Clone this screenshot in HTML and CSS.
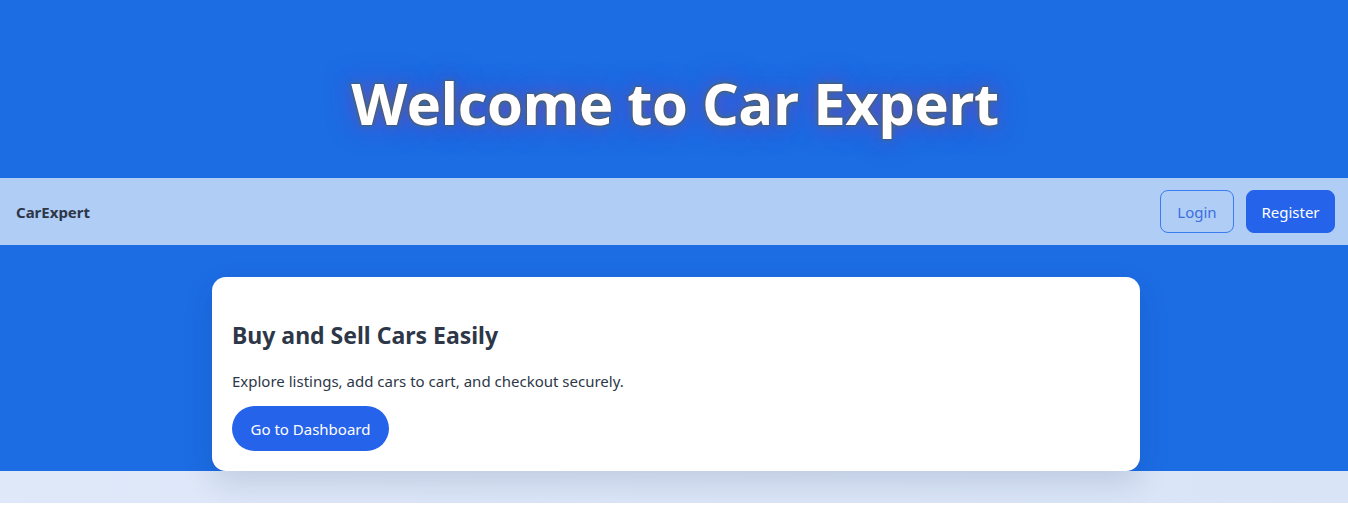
FILE: index.html
```html
<!DOCTYPE html>
<html lang="en">
<head>
<meta charset="utf-8">
<title>Car Expert</title>
<link rel="stylesheet" href="styles.css">
</head>
<body>
<div class="page">
  <header class="hero">
    <h1 class="hero-title">Welcome to Car Expert</h1>
  </header>
  <nav class="nav">
    <span class="brand">CarExpert</span>
    <div class="nav-actions">
      <button class="btn btn-outline">Login</button>
      <button class="btn btn-solid">Register</button>
    </div>
  </nav>
  <main class="main">
    <section class="card">
      <h2 class="card-title">Buy and Sell Cars Easily</h2>
      <p class="card-text">Explore listings, add cars to cart, and checkout securely.</p>
      <button class="btn-pill">Go to Dashboard</button>
    </section>
  </main>
</div>
</body>
</html>
```
FILE: styles.css
```css
html, body {
  margin: 0;
  padding: 0;
  background: #ffffff;
}
body {
  font-family: "Segoe UI", "Noto Sans", "Open Sans", sans-serif;
  color: #2d3748;
}
.page {
  background: linear-gradient(90deg, #dfe8f9, #d9e5f7);
  padding-bottom: 32px;
}
.hero {
  background: #1c6ce3;
  height: 178px;
  display: flex;
  align-items: center;
  justify-content: center;
}
.hero-title {
  margin: 0;
  padding-top: 26px;
  padding-left: 2px;
  font-family: "Open Sans", sans-serif;
  font-weight: 700;
  font-size: 58px;
  color: #ffffff;
  letter-spacing: -0.5px;
  text-shadow: 0 0 2px rgba(130, 50, 20, 0.95), 0 0 6px rgba(40, 140, 80, 0.75), 0 0 16px rgba(110, 70, 200, 0.85), 0 0 28px rgba(110, 70, 200, 0.5);
}
.nav {
  background: #b0cdf5;
  height: 67px;
  padding: 0 13px 0 16px;
  display: flex;
  align-items: center;
  justify-content: space-between;
}
.brand {
  font-weight: 700;
  font-size: 15px;
  color: #2d3748;
}
.nav-actions {
  display: flex;
  gap: 12px;
}
.btn {
  font-family: inherit;
  font-size: 15px;
  height: 43px;
  border-radius: 8px;
  cursor: pointer;
}
.btn-outline {
  background: transparent;
  border: 1px solid #3b7cf0;
  color: #3b6fe0;
  width: 74px;
}
.btn-solid {
  background: #2563eb;
  border: 1px solid #2563eb;
  color: #ffffff;
  width: 89px;
}
.main {
  background: #1c6ce3;
  padding-top: 32px;
  padding-left: 4px;
  display: flex;
  justify-content: center;
}
.card {
  width: 928px;
  box-sizing: border-box;
  background: #ffffff;
  border-radius: 14px;
  padding: 42px 20px 20px;
  box-shadow: 0 12px 30px rgba(20, 40, 90, 0.14);
}
.card-title {
  margin: 0 0 18px;
  font-size: 23px;
  font-weight: 700;
  line-height: 32px;
  color: #2d3748;
}
.card-text {
  margin: 0 0 13px;
  font-size: 15px;
  line-height: 24px;
  color: #2d3748;
}
.btn-pill {
  font-family: inherit;
  font-size: 15px;
  background: #2563eb;
  color: #ffffff;
  border: none;
  border-radius: 999px;
  height: 45px;
  padding: 0 18px;
  width: 157px;
  cursor: pointer;
}
```
